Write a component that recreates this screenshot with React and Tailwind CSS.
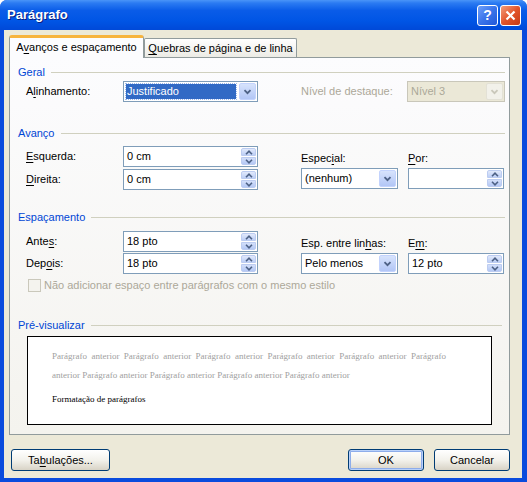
import React from "react";

const U = ({ children }) => <span className="underline underline-offset-[2px]">{children}</span>;

const Chevron = ({ up }) => (
  <svg width="8" height="5" viewBox="0 0 8 5">
    <path
      d={up ? "M1 4.2 L4 1.2 L7 4.2" : "M1 0.8 L4 3.8 L7 0.8"}
      fill="none"
      stroke="currentColor"
      strokeWidth="1.6"
    />
  </svg>
);

const DropChevron = () => (
  <svg width="9" height="6" viewBox="0 0 9 6">
    <path d="M1.5 1.2 L4.5 4.2 L7.5 1.2" fill="none" stroke="currentColor" strokeWidth="1.8" />
  </svg>
);

const SpinBox = ({ value, width }) => (
  <div className={`flex h-[21px] border border-[#7F9DB9] bg-white ${width}`}>
    <div className="flex-1 pl-[3px] leading-[19px] text-black">{value}</div>
    <div className="flex w-[17px] flex-col gap-px p-px">
      <div className="flex flex-1 items-center justify-center rounded-t-[2px] border border-[#BCCCF1] bg-gradient-to-b from-[#E1E9FB] to-[#BDCFF6] text-[#4D6185]">
        <Chevron up />
      </div>
      <div className="flex flex-1 items-center justify-center rounded-b-[2px] border border-[#BCCCF1] bg-gradient-to-b from-[#D3DFFA] to-[#B4C8F5] text-[#4D6185]">
        <Chevron />
      </div>
    </div>
  </div>
);

const Combo = ({ value, width, selected, disabled }) => (
  <div
    className={`flex h-[21px] border ${
      disabled ? "border-[#C9C7BA] bg-[#EBE8D7] text-[#ACA899]" : "border-[#7F9DB9] bg-white text-black"
    } ${width}`}
  >
    <div className="flex flex-1 p-[2px]">
      {selected ? (
        <div className="flex-1 bg-[#316AC5] pl-px leading-[15px] text-white outline-1 outline-dotted outline-[#9DB9EB]">
          {value}
        </div>
      ) : (
        <div className="flex-1 pl-px leading-[15px]">{value}</div>
      )}
    </div>
    <div
      className={`m-px flex w-[17px] items-center justify-center rounded-[2px] border ${
        disabled
          ? "border-[#E3E1D6] bg-[#F2F1EA] text-[#C9C7BA]"
          : "border-[#C3D3FD] bg-gradient-to-b from-[#D7E3FC] to-[#B2C6F6] text-[#4D6185]"
      }`}
    >
      <DropChevron />
    </div>
  </div>
);

const Group = ({ title, line = "mr-0" }) => (
  <div className="flex h-[13px] items-center gap-[6px]">
    <span className="leading-[13px] text-[#0046D5]">{title}</span>
    <div className={`h-px flex-1 bg-[#D0D0BF] ${line}`} />
  </div>
);

const Button = ({ children, width, isDefault }) => (
  <button
    className={`flex h-[22px] items-center justify-center rounded-[3px] border border-[#003C74] bg-gradient-to-b from-[#FFFFFF] via-[#F3F2EC] to-[#D8D3C6] text-black ${width} ${
      isDefault ? "shadow-[inset_0_0_0_1px_#B9D1FA,inset_0_0_0_2px_#8EADEA]" : ""
    }`}
  >
    {children}
  </button>
);

const Field = ({ label, children }) => (
  <div className="flex h-[21px] items-center">
    <div className="w-[105px] pl-[8px]">{label}</div>
    {children}
  </div>
);

export default function App() {
  return (
    <div className="flex h-[482px] w-[527px] flex-col overflow-hidden rounded-t-[7px] bg-[#0A4BDD] font-['Liberation_Sans',Arial,sans-serif] text-[11px] text-black">
      {/* title bar */}
      <div className="flex h-[30px] shrink-0 items-center bg-[linear-gradient(180deg,#4A95F8_0%,#2B7BF2_10%,#0A5CE8_35%,#0055E5_70%,#0049D8_100%)] pl-[7px] pr-[6px]">
        <span className="flex-1 text-[13px] font-bold text-white [text-shadow:1px_1px_0_#0A1F80]">Parágrafo</span>
        <div className="flex gap-[2px]">
          <div className="flex h-[21px] w-[21px] items-center justify-center rounded-[3px] border border-white bg-gradient-to-br from-[#6FA0FA] via-[#3A74EA] to-[#2158D9] text-[14px] font-bold leading-none text-white">
            ?
          </div>
          <div className="flex h-[21px] w-[21px] items-center justify-center rounded-[3px] border border-white bg-gradient-to-br from-[#F19C7A] via-[#E2542A] to-[#C83A15]">
            <svg width="11" height="11" viewBox="0 0 11 11">
              <path d="M1.5 1.5 L9.5 9.5 M9.5 1.5 L1.5 9.5" stroke="white" strokeWidth="2.2" />
            </svg>
          </div>
        </div>
      </div>

      {/* dialog body */}
      <div className="ml-[4px] mr-[5px] mb-[4px] flex flex-1 flex-col bg-[#ECE9D8] pl-[5px] pr-[12px] pt-[5px]">
        {/* tabs */}
        <div className="flex h-[22px] items-end">
          <div className="relative z-10 -mb-px flex h-[23px] w-[135px] items-center justify-center rounded-t-[3px] border-x border-t-[3px] border-x-[#919B9C] border-t-[#F7B43E] bg-[#FCFCFE] pb-px">
            A<U>v</U>anços e espaçamento
          </div>
          <div className="flex h-[19px] w-[153px] items-center justify-center rounded-t-[2px] border-x border-t border-[#919B9C] bg-gradient-to-b from-[#FFFFFF] to-[#ECEBE5] pt-px">
            <U>Q</U>uebras de página e de linha
          </div>
        </div>

        {/* panel */}
        <div className="flex h-[378px] w-[501px] flex-col border border-[#919B9C] bg-gradient-to-b from-[#FCFCFE] to-[#F4F3EE] pl-[8px] pr-[4px] pt-[8px]">
          <Group title="Geral" />
          <div className="mt-[2px] flex items-center">
            <Field label={<>A<U>l</U>inhamento:</>}>
              <Combo value="Justificado" width="w-[135px]" selected />
            </Field>
            <div className="ml-[43px] w-[106px] text-[#ACA899]">Nível de destaque:</div>
            <Combo value="Nível 3" width="w-[98px]" disabled />
          </div>

          <div className="mt-[25px]">
            <Group title="Avanço" />
          </div>
          <div className="mt-[6px] flex items-start">
            <div className="flex flex-col gap-[2px]">
              <Field label={<><U>E</U>squerda:</>}>
                <SpinBox value="0 cm" width="w-[135px]" />
              </Field>
              <Field label={<><U>D</U>ireita:</>}>
                <SpinBox value="0 cm" width="w-[135px]" />
              </Field>
            </div>
            <div className="ml-[43px] flex flex-col pt-[6px]">
              <div className="h-[13px] leading-[13px]">Espec<U>i</U>al:</div>
              <div className="mt-[3px]">
                <Combo value="(nenhum)" width="w-[97px]" />
              </div>
            </div>
            <div className="ml-[10px] flex flex-col pt-[6px]">
              <div className="h-[13px] leading-[13px]"><U>P</U>or:</div>
              <div className="mt-[3px]">
                <SpinBox value="" width="w-[96px]" />
              </div>
            </div>
          </div>

          <div className="mt-[21px]">
            <Group title="Espaçamento" />
          </div>
          <div className="mt-[7px] flex items-start">
            <div className="flex flex-col gap-px">
              <Field label={<>Ante<U>s</U>:</>}>
                <SpinBox value="18 pto" width="w-[135px]" />
              </Field>
              <Field label={<>Dep<U>o</U>is:</>}>
                <SpinBox value="18 pto" width="w-[135px]" />
              </Field>
            </div>
            <div className="ml-[43px] flex flex-col pt-[6px]">
              <div className="h-[13px] leading-[13px]">Esp. entre lin<U>h</U>as:</div>
              <div className="mt-[3px]">
                <Combo value="Pelo menos" width="w-[97px]" />
              </div>
            </div>
            <div className="ml-[10px] flex flex-col pt-[6px]">
              <div className="h-[13px] leading-[13px]">E<U>m</U>:</div>
              <div className="mt-[3px]">
                <SpinBox value="12 pto" width="w-[96px]" />
              </div>
            </div>
          </div>
          <div className="mt-[5px] flex h-[13px] items-center pl-[10px]">
            <div className="h-[13px] w-[13px] border border-[#CAC8BB] bg-[#F4F3EE]" />
            <span className="ml-[3px] text-[#ACA899]">Não adicionar espaço entre parágrafos com o mesmo estilo</span>
          </div>

          <div className="mt-[27px]">
            <Group title="Pré-visualizar" line="mr-[3px]" />
          </div>
          <div className="ml-[9px] mt-[4px] h-[89px] w-[465px] border border-black bg-white pl-[24px] pt-[10px] font-['Liberation_Serif','Times_New_Roman',serif] text-[9px] leading-[19px]">
            <div className="w-[394px] text-justify text-[#A0A0A0] [text-align-last:justify]">
              Parágrafo anterior Parágrafo anterior Parágrafo anterior Parágrafo anterior Parágrafo anterior Parágrafo
            </div>
            <div className="text-[#A0A0A0]">
              anterior Parágrafo anterior Parágrafo anterior Parágrafo anterior Parágrafo anterior
            </div>
            <div className="mt-[5px] text-black">Formatação de parágrafos</div>
          </div>
        </div>

        {/* buttons */}
        <div className="mt-[14px] flex items-center">
          <div className="ml-[2px]">
            <Button width="w-[99px]">
              Ta<U>b</U>ulações...
            </Button>
          </div>
          <div className="flex-1" />
          <Button width="w-[76px]" isDefault>
            OK
          </Button>
          <div className="ml-[10px]">
            <Button width="w-[76px]">Cancelar</Button>
          </div>
        </div>
      </div>
    </div>
  );
}
